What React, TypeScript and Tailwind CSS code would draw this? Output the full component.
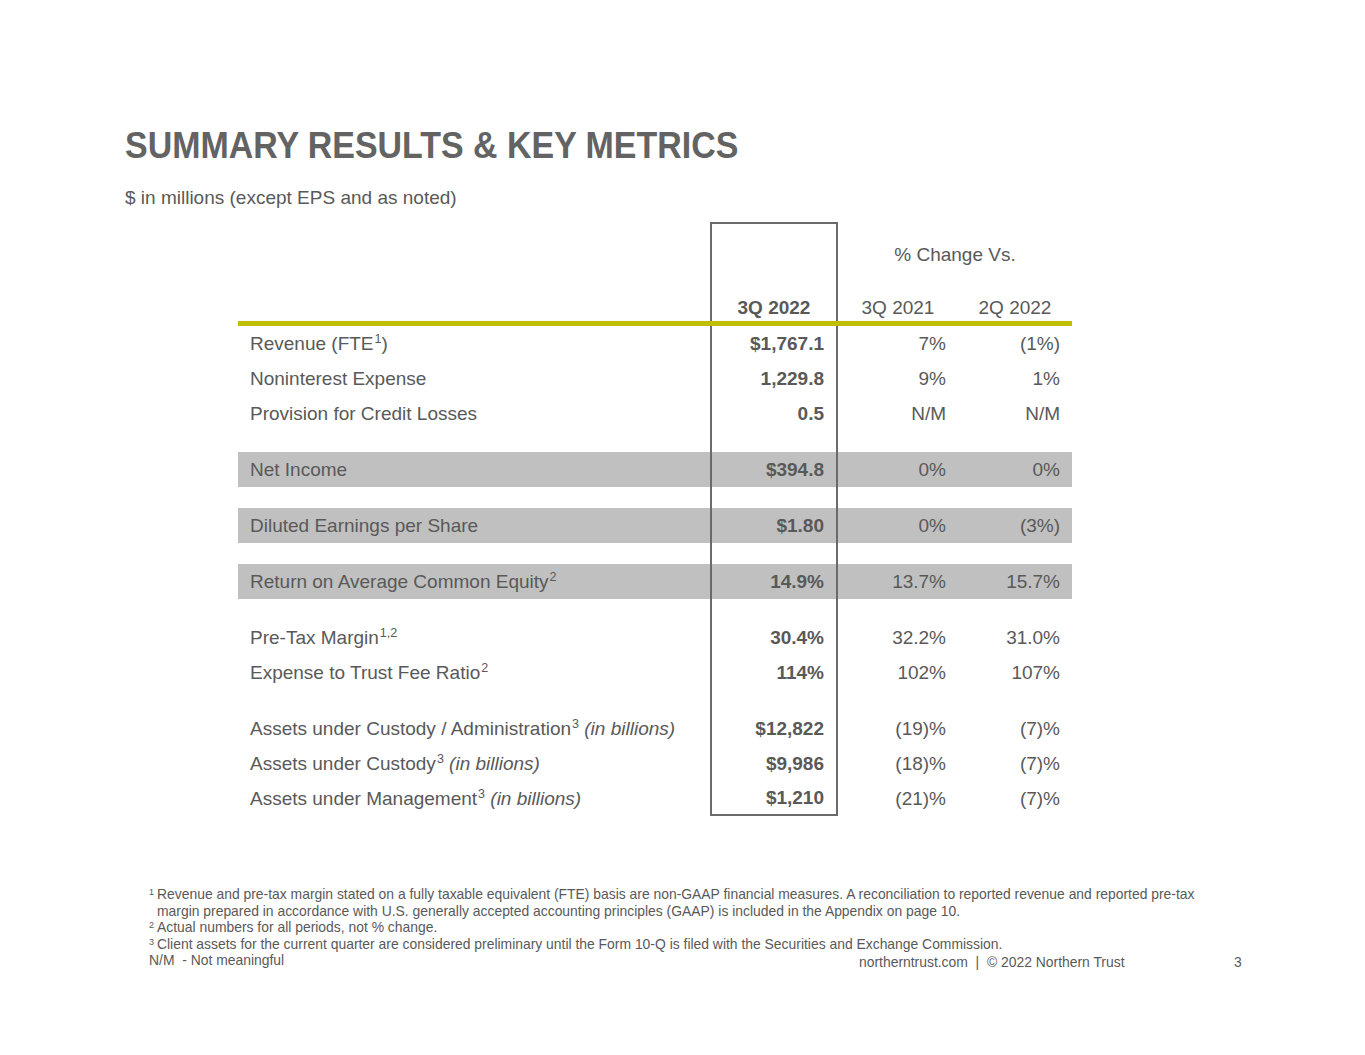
import React from "react";

type Row = {
  label: React.ReactNode;
  v: string;
  a: string;
  b: string;
  band?: boolean;
};

const Sup = ({ children }: { children: React.ReactNode }) => (
  <sup className="text-[12.5px] top-[-0.55em] ml-[1px]">{children}</sup>
);

const groups: Row[][] = [
  [
    { label: <>Revenue (FTE<Sup>1</Sup>)</>, v: "$1,767.1", a: "7%", b: "(1%)" },
    { label: "Noninterest Expense", v: "1,229.8", a: "9%", b: "1%" },
    { label: "Provision for Credit Losses", v: "0.5", a: "N/M", b: "N/M" },
  ],
  [{ label: "Net Income", v: "$394.8", a: "0%", b: "0%", band: true }],
  [{ label: "Diluted Earnings per Share", v: "$1.80", a: "0%", b: "(3%)", band: true }],
  [
    {
      label: <>Return on Average Common Equity<Sup>2</Sup></>,
      v: "14.9%",
      a: "13.7%",
      b: "15.7%",
      band: true,
    },
  ],
  [
    { label: <>Pre-Tax Margin<Sup>1,2</Sup></>, v: "30.4%", a: "32.2%", b: "31.0%" },
    { label: <>Expense to Trust Fee Ratio<Sup>2</Sup></>, v: "114%", a: "102%", b: "107%" },
  ],
  [
    {
      label: (
        <>
          Assets under Custody / Administration<Sup>3</Sup> <i>(in billions)</i>
        </>
      ),
      v: "$12,822",
      a: "(19)%",
      b: "(7)%",
    },
    {
      label: (
        <>
          Assets under Custody<Sup>3</Sup> <i>(in billions)</i>
        </>
      ),
      v: "$9,986",
      a: "(18)%",
      b: "(7)%",
    },
    {
      label: (
        <>
          Assets under Management<Sup>3</Sup> <i>(in billions)</i>
        </>
      ),
      v: "$1,210",
      a: "(21)%",
      b: "(7)%",
    },
  ],
];

const grid = "grid grid-cols-[472px_128px_120px_114px]";

function DataRow({ r, last }: { r: Row; last: boolean }) {
  return (
    <div className={`${grid} h-[35px] ${r.band ? "bg-[#c0c0c0]" : ""}`}>
      <div className="flex items-center pl-[12px] whitespace-nowrap">
        <span>{r.label}</span>
      </div>
      <div
        className={`flex items-center justify-end pr-[12px] font-bold border-x-2 border-[#6a6a6a] ${
          last ? "border-b-2" : ""
        }`}
      >
        {r.v}
      </div>
      <div className="flex items-center justify-end pr-[12px]">{r.a}</div>
      <div className="flex items-center justify-end pr-[12px]">{r.b}</div>
    </div>
  );
}

function Spacer() {
  return (
    <div className={`${grid} h-[21px]`}>
      <div />
      <div className="border-x-2 border-[#6a6a6a]" />
      <div />
      <div />
    </div>
  );
}

export default function App() {
  return (
    <div
      className="w-[1365px] h-[1055px] bg-white text-[#595959] relative overflow-hidden"
      style={{ fontFamily: '"Liberation Sans", Arial, sans-serif' }}
    >
      <div className="pt-[127px] pl-[125px]">
        <h1 className="text-[37px] leading-[37px] font-bold text-[#636363] whitespace-nowrap origin-left scale-x-[0.917]">
          SUMMARY RESULTS &amp; KEY METRICS
        </h1>
        <p className="mt-[23px] text-[19px] leading-[22px]">$ in millions (except EPS and as noted)</p>
      </div>

      <div className="ml-[238px] mt-[13px] w-[834px] text-[19px] leading-[22px]">
        {/* header */}
        <div className={`${grid} h-[66px]`}>
          <div />
          <div className="border-x-2 border-t-2 border-[#6a6a6a]" />
          <div className="col-span-2 flex items-center justify-center">% Change Vs.</div>
        </div>
        <div className={`${grid} h-[33px]`}>
          <div />
          <div className="flex items-end justify-center pb-[2px] font-bold border-x-2 border-[#6a6a6a]">
            3Q 2022
          </div>
          <div className="flex items-end justify-center pb-[2px]">3Q 2021</div>
          <div className="flex items-end justify-center pb-[2px]">2Q 2022</div>
        </div>
        <div className="h-[5px] bg-[#bfbf00]" />

        {groups.map((g, gi) => (
          <React.Fragment key={gi}>
            {gi > 0 && <Spacer />}
            {g.map((r, ri) => (
              <DataRow key={ri} r={r} last={gi === groups.length - 1 && ri === g.length - 1} />
            ))}
          </React.Fragment>
        ))}
      </div>

      <div className="absolute left-[149px] top-[886px] text-[13.9px] leading-[16.5px] text-[#595959]">
        <div className="flex">
          <span className="w-[8px] text-[9px] leading-[12px]">1</span>
          <div>
            <div>
              Revenue and pre-tax margin stated on a fully taxable equivalent (FTE) basis are non-GAAP financial
              measures. A reconciliation to reported revenue and reported pre-tax
            </div>
            <div>
              margin prepared in accordance with U.S. generally accepted accounting principles (GAAP) is included in
              the Appendix on page 10.
            </div>
          </div>
        </div>
        <div className="flex">
          <span className="w-[8px] text-[9px] leading-[12px]">2</span>
          <div>Actual numbers for all periods, not % change.</div>
        </div>
        <div className="flex">
          <span className="w-[8px] text-[9px] leading-[12px]">3</span>
          <div>
            Client assets for the current quarter are considered preliminary until the Form 10-Q is filed with the
            Securities and Exchange Commission.
          </div>
        </div>
        <div className="flex">
          <div className="w-[710px]">N/M&nbsp; - Not meaningful</div>
          <div className="w-[375px] pt-[2px]">northerntrust.com&nbsp; |&nbsp; © 2022 Northern Trust</div>
          <div className="pt-[2px]">3</div>
        </div>
      </div>
    </div>
  );
}
